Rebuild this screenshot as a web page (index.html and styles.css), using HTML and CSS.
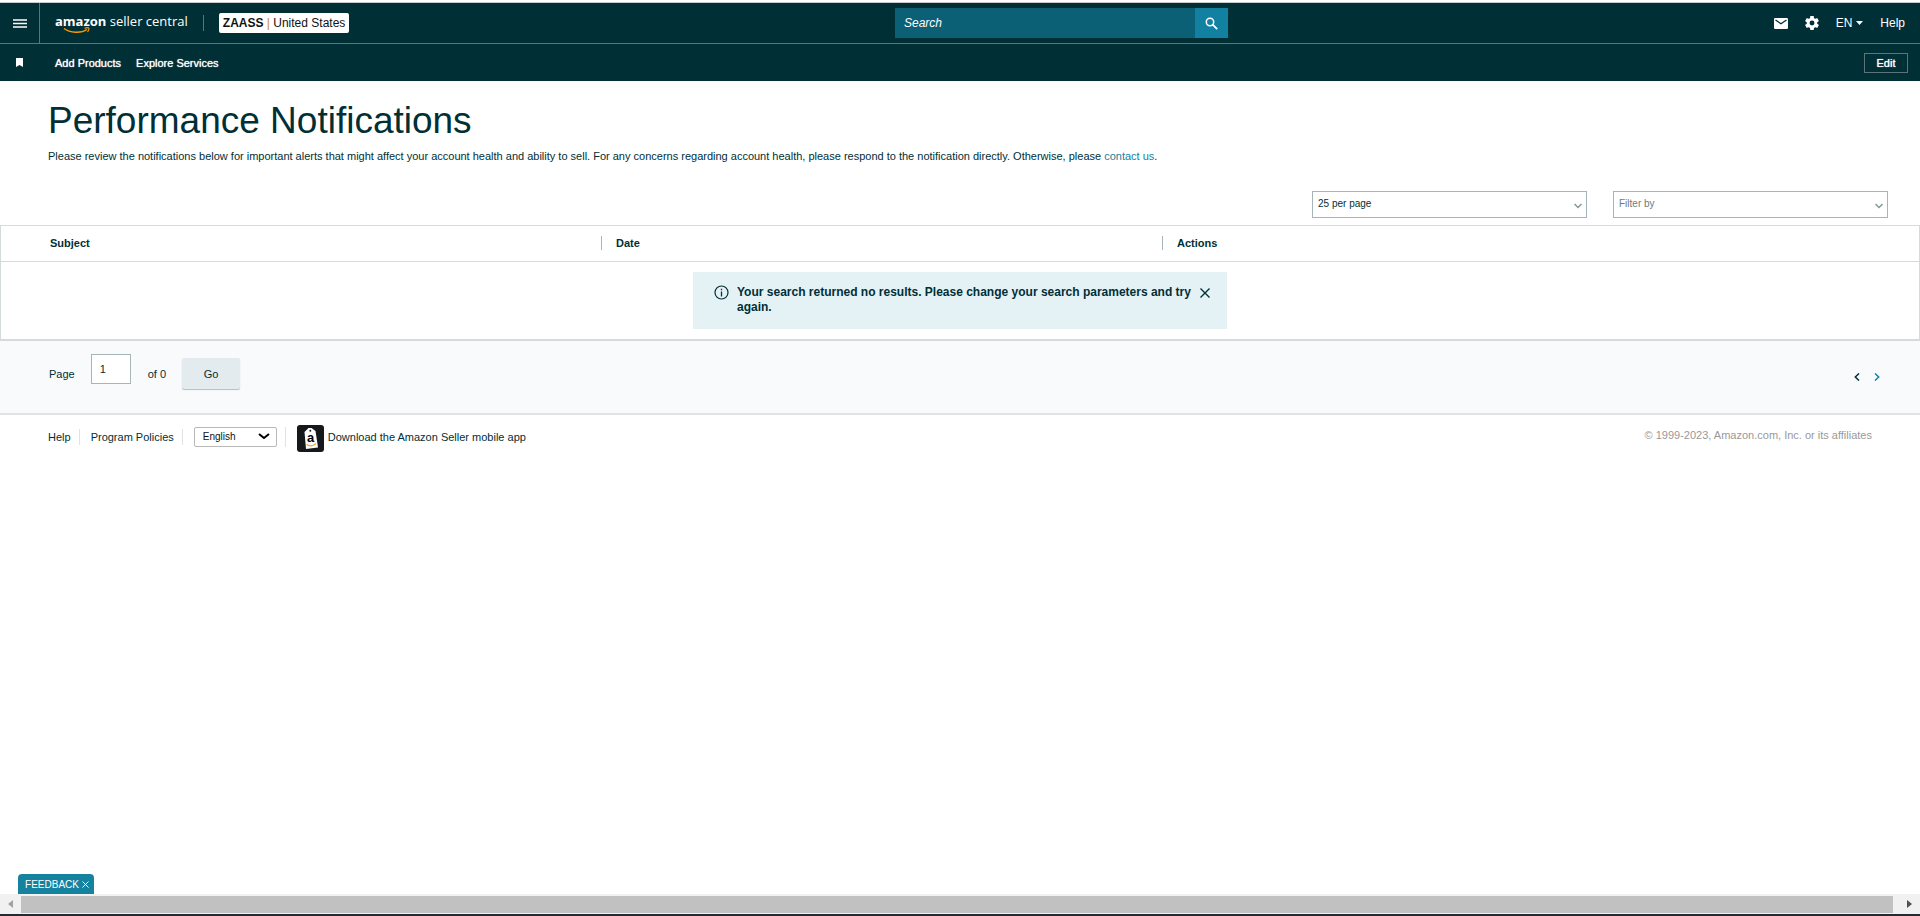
FILE: index.html
```html
<!DOCTYPE html>
<html lang="en">
    <head>
        <meta charset="UTF-8" />
        <meta name="viewport" content="width=device-width, initial-scale=1.0" />
        <title>Performance Notifications</title>
        <link rel="stylesheet" href="styles.css">
    </head>
    <body>
        <header>
            <div class="top-bar">
                <button class="menu-button" aria-label="Menu">
                    <svg width="14" height="9" viewBox="0 0 14 9">
                        <path d="M0 1h14M0 4.5h14M0 8h14" stroke="#fff" stroke-width="1.4" />
                    </svg>
                </button>
                <a class="logo" href="#">
                    <span class="logo-text"><b>amazon</b> seller central</span>
                    <svg class="smile" width="28" height="7" viewBox="0 0 28 7">
                        <path d="M1 1.5C7 6 18 6.500 24 2.500" fill="none" stroke="#f90" stroke-width="1.500" />
                        <path d="M21.500 1.200c2-.6 4-.6 4.300 0 .3.600-.2 2.300-1.300 3.800" fill="none" stroke="#f90" stroke-width="1.200" />
                    </svg>
                </a>
                <button class="account"><b>ZAASS</b> <span class="bar">|</span> United States</button>
                <form class="search">
                    <input type="text" placeholder="Search" aria-label="Search" />
                    <button type="button" aria-label="Search">
                        <svg width="13" height="13" viewBox="0 0 13 13">
                            <circle cx="5" cy="5" r="3.700" fill="none" stroke="#fff" stroke-width="1.500" />
                            <path d="M7.700 7.700l4.500 4.500" stroke="#fff" stroke-width="1.800" />
                        </svg>
                    </button>
                </form>
                <nav class="tools">
                    <a href="#" aria-label="Messages">
                        <svg width="14" height="11" viewBox="0 0 14 11">
                            <rect width="14" height="11" rx="1.300" fill="#fff" />
                            <path d="M1.500 2L7 5.700 12.500 2" fill="none" stroke="#002f36" stroke-width="1.300" />
                        </svg>
                    </a>
                    <a href="#" aria-label="Settings">
                        <svg width="14" height="14" viewBox="2 2 20 20">
                            <path fill="#fff" d="M19.430 12.980c.04-.32.070-.64.070-.98s-.03-.66-.07-.98l2.110-1.650c.19-.15.240-.42.120-.64l-2-3.460c-.12-.22-.39-.3-.61-.22l-2.490 1c-.52-.4-1.080-.73-1.690-.98l-.38-2.650C14.460 2.180 14.250 2 14 2h-4c-.25 0-.46.180-.49.420l-.38 2.650c-.61.250-1.170.590-1.690.980l-2.490-1c-.23-.09-.49 0-.61.220l-2 3.460c-.13.220-.07.490.120.640l2.110 1.650c-.04.320-.07.650-.07.980s.03.660.070.980l-2.110 1.650c-.19.150-.24.420-.12.640l2 3.460c.12.220.390.300.610.220l2.490-1c.52.400 1.080.730 1.690.980l.38 2.650c.03.240.240.420.490.420h4c.25 0 .46-.18.490-.42l.38-2.650c.61-.25 1.170-.59 1.690-.98l2.490 1c.23.090.490 0 .61-.22l2-3.460c.12-.22.070-.49-.12-.64l-2.110-1.650zM12 15.500a3.500 3.500 0 1 1 0-7 3.500 3.500 0 0 1 0 7z" />
                        </svg>
                    </a>
                    <a class="language" href="#">EN
                        <svg width="7" height="4" viewBox="0 0 7 4"><path d="M0 0h7L3.500 4z" fill="#fff" /></svg>
                    </a>
                    <a href="#">Help</a>
                </nav>
            </div>
            <div class="favorites-bar">
                <svg class="bookmark" width="7" height="9" viewBox="0 0 7 9">
                    <path d="M0 0h7v9L3.500 7 0 9z" fill="#fff" />
                </svg>
                <a href="#">Add Products</a>
                <a href="#">Explore Services</a>
                <button class="edit">Edit</button>
            </div>
        </header>

        <main>
            <div class="intro">
                <h1>Performance Notifications</h1>
                <p>Please review the notifications below for important alerts that might affect your account health and ability to sell. For any concerns regarding account health, please respond to the notification directly. Otherwise, please <a href="#">contact us</a>.</p>
            </div>

            <div class="filters">
                <select aria-label="Results per page">
                    <option>25 per page</option>
                </select>
                <select class="muted" aria-label="Filter by">
                    <option>Filter by</option>
                </select>
            </div>

            <table>
                <thead>
                    <tr>
                        <th class="subject">Subject</th>
                        <th class="date"><span>Date</span></th>
                        <th><span>Actions</span></th>
                    </tr>
                </thead>
                <tbody>
                    <tr>
                        <td colspan="3">
                            <div class="alert">
                                <svg width="15" height="15" viewBox="0 0 15 15">
                                    <circle cx="7.500" cy="7.500" r="6.500" fill="none" stroke="#002f36" stroke-width="1.200" />
                                    <path d="M7.500 6.500v5M7.500 3.700v1.500" stroke="#002f36" stroke-width="1.300" />
                                </svg>
                                <p>Your search returned no results. Please change your search parameters and try again.</p>
                                <button aria-label="Close">
                                    <svg width="10" height="10" viewBox="0 0 10 10">
                                        <path d="M.5.500l9 9M9.500.500l-9 9" stroke="#002f36" stroke-width="1.400" />
                                    </svg>
                                </button>
                            </div>
                        </td>
                    </tr>
                </tbody>
            </table>

            <div class="pager">
                <label for="page">Page</label>
                <input id="page" type="text" value="1" />
                <span class="total">of 0</span>
                <button class="go">Go</button>
                <div class="arrows">
                    <button aria-label="Previous page">
                        <svg width="6" height="8" viewBox="0 0 6 8"><path d="M5 .5L1.300 4 5 7.500" fill="none" stroke="#002f36" stroke-width="1.500" /></svg>
                    </button>
                    <button aria-label="Next page">
                        <svg width="6" height="8" viewBox="0 0 6 8"><path d="M1 .5L4.700 4 1 7.500" fill="none" stroke="#1582a0" stroke-width="1.500" /></svg>
                    </button>
                </div>
            </div>
        </main>

        <footer>
            <a class="item" href="#">Help</a>
            <a class="item" href="#">Program Policies</a>
            <div class="item">
                <select aria-label="Language">
                    <option>English</option>
                </select>
            </div>
            <a class="app" href="#">
                <svg width="27" height="27" viewBox="0 0 27 27">
                    <rect width="27" height="27" rx="3" fill="#16191b" />
                    <path d="M7.500 7l4-4h3l4 3 2.500 16.500-12 1.500z" fill="#fff" />
                    <circle cx="13.300" cy="5.800" r="1" fill="#16191b" />
                    <path d="M9.500 19.500c3 2 7 1.500 9.500-1" fill="none" stroke="#f5a623" stroke-width="1.300" />
                    <text class="app-letter" x="10" y="17">a</text>
                </svg>
                <span>Download the Amazon Seller mobile app</span>
            </a>
            <span class="copyright">© 1999-2023, Amazon.com, Inc. or its affiliates</span>
        </footer>

        <div class="bottom">
            <button class="feedback">FEEDBACK
                <svg width="7" height="7" viewBox="0 0 7 7"><path d="M.5.500l6 6M6.500.500l-6 6" stroke="#fff" /></svg>
            </button>
            <div class="scrollbar">
                <svg width="5" height="8" viewBox="0 0 5 8"><path d="M5 0v8L0 4z" fill="#a3a3a3" /></svg>
                <div class="thumb"></div>
                <svg width="5" height="8" viewBox="0 0 5 8"><path d="M0 0v8l5-4z" fill="#505050" /></svg>
            </div>
        </div>
    </body>
</html>
```
FILE: styles.css
```css
* {
    box-sizing: border-box;
}

body {
    display: flex;
    flex-direction: column;
    min-height: 100vh;
    margin: 0;
    padding-top: 2px;
    font-family: "Liberation Sans", Arial, sans-serif;
    font-size: 11px;
    color: #002f36;
    background: #fff;
}

a {
    color: inherit;
    text-decoration: none;
}

button,
input,
select {
    font-family: inherit;
    font-size: 11px;
    color: inherit;
    border: none;
    border-radius: 0;
    margin: 0;
    padding: 0;
}

button {
    background: none;
    cursor: pointer;
}

svg {
    display: block;
    flex: none;
}

header {
    color: #fff;
    background: #002f36;
    border-top: 1px solid #c8cccd;
}

.top-bar {
    display: flex;
    align-items: center;
    height: 41px;
    padding-right: 15px;
    border-bottom: 1px solid #5f7479;
    font-size: 12px;
}

.menu-button {
    display: flex;
    align-items: center;
    justify-content: center;
    align-self: stretch;
    width: 40px;
    border-right: 1px solid #5f7479;
}

.logo {
    display: flex;
    flex-direction: column;
    margin-left: 15px;
    padding-right: 15px;
    border-right: 1px solid #5f7479;
    height: 16px;
}

.logo-text {
    font-family: "Open Sans", sans-serif;
    font-size: 13px;
    line-height: 12px;
    white-space: nowrap;
}

.smile {
    margin-left: 8px;
}

.account {
    height: 20px;
    margin-left: 15px;
    padding: 0 4px;
    font-size: 12px;
    color: #111;
    background: #fff;
    border-radius: 2px;
}

.account .bar {
    color: #c98a1b;
}

.search {
    display: flex;
    width: 333px;
    height: 30px;
    margin: 0 auto;
}

.search input {
    flex: 1;
    min-width: 0;
    padding: 0 9px;
    font-size: 12px;
    background: #0b6076;
}

.search input::placeholder {
    color: #fff;
    font-style: italic;
    opacity: 1;
}

.search button {
    display: flex;
    align-items: center;
    justify-content: center;
    width: 33px;
    background: #1280a0;
}

.tools {
    display: flex;
    align-items: center;
    gap: 17px;
}

.language {
    display: flex;
    align-items: center;
    gap: 4px;
}

.favorites-bar {
    display: flex;
    align-items: center;
    gap: 15px;
    height: 37px;
    padding: 0 12px 0 16px;
    text-shadow: 0 0 1px #fff;
}

.bookmark {
    margin-right: 17px;
}

.edit {
    width: 44px;
    height: 20px;
    margin-left: auto;
    border: 1px solid #5f7479;
    text-shadow: inherit;
}

.intro {
    padding: 18px 48px 0;
}

h1 {
    margin: 0;
    font-size: 37px;
    font-weight: normal;
    line-height: 44px;
}

.intro p {
    margin: 6px 0 0;
    line-height: 14px;
}

.intro a {
    color: #1582a0;
}

.filters {
    display: flex;
    justify-content: flex-end;
    gap: 26px;
    padding: 28px 32px 7px;
}

select {
    appearance: none;
    background: #fff url("data:image/svg+xml,%3Csvg xmlns='http://www.w3.org/2000/svg' width='8' height='6'%3E%3Cpath d='M.5 1L4 4.500 7.500 1' fill='none' stroke='%23859799' stroke-width='1.500'/%3E%3C/svg%3E") no-repeat right 4px top 11px;
}

.filters select {
    width: 275px;
    height: 27px;
    padding: 0 5px 2px;
    font-size: 10px;
    border: 1px solid #a5b5b8;
}

.filters .muted {
    color: #6b7c7f;
}

table {
    width: 100%;
    table-layout: fixed;
    border-collapse: separate;
    border-spacing: 0;
    border: 1px solid #d5dbdd;
    border-bottom-width: 2px;
}

th {
    height: 36px;
    padding: 0 0 1px;
    text-align: left;
    border-bottom: 1px solid #d5dbdd;
}

th span {
    display: block;
    padding-left: 14px;
    line-height: 14px;
    border-left: 1px solid #a5b5b8;
}

.subject {
    width: 600px;
    padding-left: 49px;
}

.date {
    width: 561px;
}

td {
    padding: 10px 0;
}

.alert {
    display: flex;
    align-items: flex-start;
    width: 534px;
    height: 57px;
    margin: 0 auto;
    padding: 13px 17px 0 21px;
    font-size: 12px;
    font-weight: bold;
    line-height: 15px;
    background: #e4f2f6;
}

.alert p {
    flex: 1;
    margin: 0 0 0 8px;
}

.alert button {
    padding-top: 3px;
}

.pager {
    display: flex;
    align-items: center;
    height: 74px;
    padding: 0 40px 7px 49px;
    background: #f9fafc;
    border-bottom: 2px solid #dfe3e5;
}

.pager input {
    width: 40px;
    height: 30px;
    margin: 0 17px 10px 16px;
    padding: 0 8px;
    border: 1px solid #a5b5b8;
    background: #fff;
}

.go {
    width: 58px;
    height: 31px;
    margin-left: 16px;
    background: #e3ebee;
    border-radius: 2px;
    box-shadow: 0 1px 1px #b5bdc0;
}

.arrows {
    display: flex;
    gap: 14px;
    margin-left: auto;
    padding-top: 7px;
}

footer {
    display: flex;
    align-items: center;
    padding: 10px 48px 0;
}

.item {
    margin: 0 11px 4px 0;
    padding-right: 8px;
    line-height: 16px;
    border-right: 1px solid #dfe3e5;
}

footer select {
    display: block;
    width: 83px;
    height: 20px;
    padding: 0 8px;
    font-size: 10px;
    color: #111;
    border: 1px solid #b8b8b8;
    border-radius: 2px;
    background-image: url("data:image/svg+xml,%3Csvg xmlns='http://www.w3.org/2000/svg' width='12' height='7'%3E%3Cpath d='M1 1l5 4 5-4' fill='none' stroke='%23000' stroke-width='2'/%3E%3C/svg%3E");
    background-position: right 6px center;
}

.app {
    display: flex;
    align-items: center;
    gap: 4px;
}

.app span {
    padding-bottom: 4px;
}

.app-letter {
    font-size: 13px;
    font-weight: bold;
}

.copyright {
    margin-left: auto;
    padding-bottom: 8px;
    color: #999;
}

.bottom {
    margin-top: auto;
    border-bottom: 2px solid #262a33;
}

.feedback {
    display: flex;
    align-items: center;
    justify-content: flex-end;
    gap: 3px;
    width: 76px;
    height: 20px;
    margin-left: 18px;
    padding-right: 5px;
    font-size: 10px;
    color: #fff;
    background: #1582a0;
    border-radius: 4px 4px 0 0;
}

.scrollbar {
    display: flex;
    align-items: center;
    gap: 8px;
    height: 20px;
    padding: 0 8px;
    background: #f1f1f1;
}

.thumb {
    flex: 1;
    height: 17px;
    margin-right: 6px;
    background: #c1c1c1;
}
```
